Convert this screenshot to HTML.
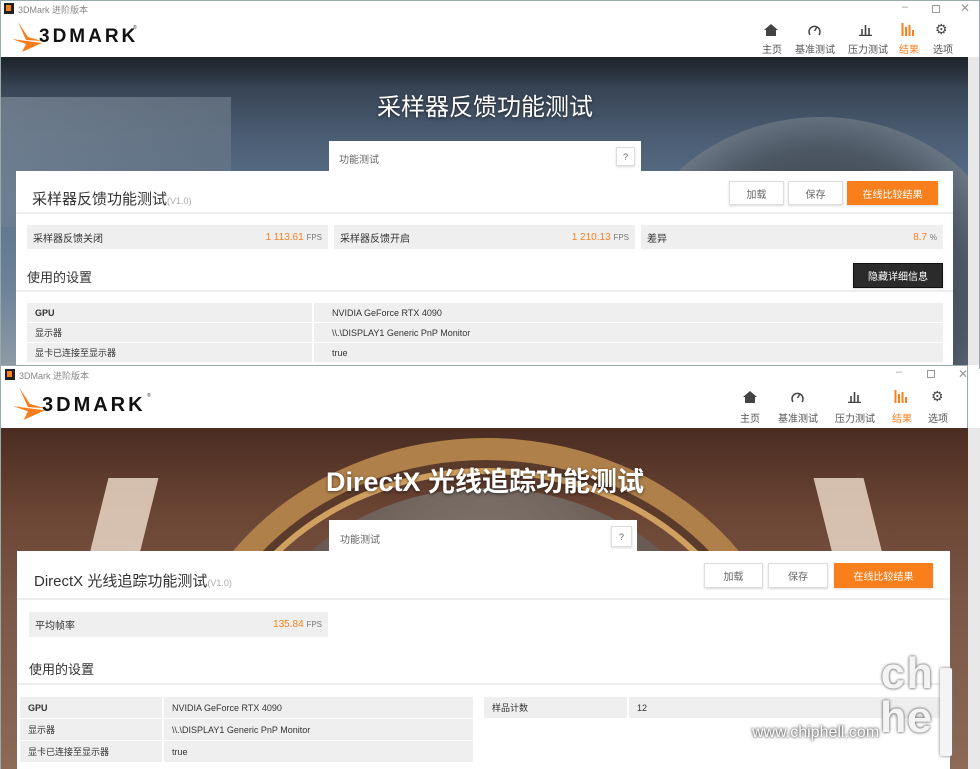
<!DOCTYPE html>
<html><head><meta charset="utf-8">
<style>
*{margin:0;padding:0;box-sizing:border-box}
html,body{width:980px;height:769px;overflow:hidden}
body{background:#fff;font-family:"Liberation Sans","Noto Sans CJK SC",sans-serif;color:#333;position:relative}
.a{position:absolute}
.t{font-size:10px;color:#888;white-space:nowrap}
.nav{font-size:10px;color:#555;text-align:center;white-space:nowrap}
.btn{position:absolute;background:#fff;border:1px solid #ddd;font-size:10px;color:#666;display:flex;align-items:center;justify-content:center;box-shadow:0 1px 2px rgba(0,0,0,.15)}
.or{background:#f87f1c;color:#fff;border-color:#f87f1c}
.box{position:absolute;background:#efefef;font-size:10px;color:#333;display:flex;align-items:center;justify-content:space-between;padding:0 6px}
.box b{color:#f87f1c;font-weight:normal}
.box small{color:#777;font-size:8px}
.row{position:absolute;background:#efefef;font-size:9px;color:#333;display:flex;align-items:center;padding-left:8px}
.hero1{background:linear-gradient(180deg,#2b3440 0%,#4a5c72 25%,#5f7690 50%,#6d8299 75%,#8e9aa5 100%)}
.logo{font-weight:bold;font-size:19px;letter-spacing:3px;color:#111;font-family:"Liberation Sans",sans-serif}
</style></head><body>

<!-- ===== Window 1 ===== -->
<div class="a" style="left:0;top:0;width:980px;height:18px;background:#fff"></div>
<div class="a" style="left:4px;top:3px;width:10px;height:11px;background:#222"></div>
<div class="a" style="left:6px;top:5px;width:5px;height:6px;background:#f87f1c"></div>
<div class="a t" style="left:18px;top:3px;font-size:9px">3DMark 进阶版本</div>
<div class="a t" style="left:902px;top:1px;font-size:11px;color:#999">–</div>
<div class="a" style="left:932px;top:5px;width:8px;height:8px;border:1px solid #999"></div>
<div class="a t" style="left:960px;top:1px;font-size:12px;color:#999">✕</div>

<svg class="a" style="left:12px;top:22px" width="30" height="32" viewBox="0 0 30 32"><path d="M6 0 L16 15 L30 19 L14 18 Z" fill="#f87f1c"/><path d="M0 17 L30 21 L10 30 L14 22 Z" fill="#f87f1c"/></svg>
<div class="a logo" style="left:39px;top:26px">3DMARK</div>
<div class="a" style="left:133px;top:25px;font-size:5px;color:#333">®</div>

<svg class="a" style="left:764px;top:24px" width="14" height="12"><path d="M7 0 L14 6 L12 6 L12 12 L2 12 L2 6 L0 6Z" fill="#444"/></svg>
<svg class="a" style="left:808px;top:24px" width="13" height="12"><path d="M2 11 A5.5 5.5 0 1 1 11 11" stroke="#444" stroke-width="1.5" fill="none"/><path d="M6.5 7 L9 3" stroke="#444" stroke-width="1.4"/></svg>
<svg class="a" style="left:859px;top:24px" width="13" height="12"><path d="M3 5v6M6.5 1v10M10 4v7M0 11.5h13" stroke="#444" stroke-width="1.6"/></svg>
<svg class="a" style="left:901px;top:23px" width="14" height="13"><path d="M1.5 0v13M5 4v9M8.5 2v11M12 7v6" stroke="#f87f1c" stroke-width="2"/></svg>
<div class="a" style="left:935px;top:21px;font-size:14px;color:#444">⚙</div>
<div class="a nav" style="left:762px;top:41px">主页</div>
<div class="a nav" style="left:795px;top:41px">基准测试</div>
<div class="a nav" style="left:848px;top:41px">压力测试</div>
<div class="a nav" style="left:899px;top:41px;color:#f87f1c">结果</div>
<div class="a nav" style="left:933px;top:41px">选项</div>

<div class="a hero1" style="left:1px;top:57px;width:967px;height:308px;overflow:hidden">
  <div class="a" style="left:0;top:40px;width:230px;height:130px;background:linear-gradient(160deg,#9aa6b2,#5d6b7a);opacity:.5"></div>
  <div class="a" style="left:620px;top:60px;width:400px;height:360px;border-radius:50%;background:radial-gradient(circle,#3a4048 30%,#4d5865 55%,#6a7583 70%,transparent 72%)"></div>
  <div class="a" style="left:0;top:0;width:967px;height:30px;background:linear-gradient(180deg,rgba(20,25,30,.6),transparent)"></div>
</div>
<div class="a" style="left:968px;top:57px;width:12px;height:308px;background:#e8e8e8"></div>
<div class="a" style="left:0;top:0;width:980px;height:369px;border:1px solid #9aa;border-bottom:none"></div>

<div class="a" style="left:300px;top:87px;width:370px;text-align:center;font-size:24px;color:#fff;text-shadow:0 1px 3px rgba(0,0,0,.6)">采样器反馈功能测试</div>
<div class="a" style="left:329px;top:141px;width:312px;height:31px;background:#fff"></div>
<div class="a t" style="left:339px;top:151px;color:#666">功能测试</div>
<div class="btn" style="left:616px;top:147px;width:19px;height:19px;font-size:9px">?</div>

<div class="a" style="left:16px;top:171px;width:937px;height:194px;background:#fff"></div>
<div class="a" style="left:32px;top:188px;font-size:15px;color:#333;white-space:nowrap">采样器反馈功能测试<span style="font-size:9px;color:#aaa">(V1.0)</span></div>
<div class="btn" style="left:729px;top:181px;width:55px;height:24px">加载</div>
<div class="btn" style="left:788px;top:181px;width:55px;height:24px">保存</div>
<div class="btn or" style="left:847px;top:181px;width:91px;height:24px">在线比较结果</div>
<div class="a" style="left:16px;top:212px;width:937px;height:2px;background:#eee"></div>
<div class="box" style="left:27px;top:225px;width:301px;height:24px"><span>采样器反馈关闭</span><span><b>1 113.61</b> <small>FPS</small></span></div>
<div class="box" style="left:334px;top:225px;width:301px;height:24px"><span>采样器反馈开启</span><span><b>1 210.13</b> <small>FPS</small></span></div>
<div class="box" style="left:641px;top:225px;width:302px;height:24px"><span>差异</span><span><b>8.7</b> <small>%</small></span></div>
<div class="a" style="left:27px;top:267px;font-size:13px;color:#333">使用的设置</div>
<div class="btn" style="left:853px;top:263px;width:90px;height:25px;background:#2b2b2b;color:#fff;border-color:#111">隐藏详细信息</div>
<div class="a" style="left:16px;top:290px;width:937px;height:2px;background:#eee"></div>
<div class="row" style="left:27px;top:303px;width:285px;height:19px;font-weight:bold">GPU</div>
<div class="row" style="left:314px;top:303px;width:629px;height:19px;padding-left:18px">NVIDIA GeForce RTX 4090</div>
<div class="row" style="left:27px;top:323px;width:285px;height:19px">显示器</div>
<div class="row" style="left:314px;top:323px;width:629px;height:19px;padding-left:18px">\\.\DISPLAY1 Generic PnP Monitor</div>
<div class="row" style="left:27px;top:343px;width:285px;height:19px">显卡已连接至显示器</div>
<div class="row" style="left:314px;top:343px;width:629px;height:19px;padding-left:18px">true</div>

<!-- ===== Window 2 ===== -->
<div class="a" style="left:0;top:365px;width:968px;height:404px;background:#fff;border:1px solid #9aa;border-bottom:none"></div>
<div class="a" style="left:5px;top:369px;width:10px;height:11px;background:#222"></div>
<div class="a" style="left:7px;top:371px;width:5px;height:6px;background:#f87f1c"></div>
<div class="a t" style="left:19px;top:369px;font-size:9px">3DMark 进阶版本</div>
<div class="a t" style="left:896px;top:366px;font-size:11px;color:#999">–</div>
<div class="a" style="left:927px;top:370px;width:8px;height:8px;border:1px solid #999"></div>
<div class="a t" style="left:958px;top:367px;font-size:12px;color:#999">✕</div>

<svg class="a" style="left:13px;top:388px" width="32" height="34" viewBox="0 0 30 32"><path d="M6 0 L16 15 L30 19 L14 18 Z" fill="#f87f1c"/><path d="M0 17 L30 21 L10 30 L14 22 Z" fill="#f87f1c"/></svg>
<div class="a logo" style="left:42px;top:394px;font-size:20px">3DMARK</div>
<div class="a" style="left:147px;top:393px;font-size:5px;color:#333">®</div>

<svg class="a" style="left:743px;top:391px" width="14" height="12"><path d="M7 0 L14 6 L12 6 L12 12 L2 12 L2 6 L0 6Z" fill="#444"/></svg>
<svg class="a" style="left:791px;top:391px" width="13" height="12"><path d="M2 11 A5.5 5.5 0 1 1 11 11" stroke="#444" stroke-width="1.5" fill="none"/><path d="M6.5 7 L9 3" stroke="#444" stroke-width="1.4"/></svg>
<svg class="a" style="left:848px;top:391px" width="13" height="12"><path d="M3 5v6M6.5 1v10M10 4v7M0 11.5h13" stroke="#444" stroke-width="1.6"/></svg>
<svg class="a" style="left:894px;top:390px" width="14" height="13"><path d="M1.5 0v13M5 4v9M8.5 2v11M12 7v6" stroke="#f87f1c" stroke-width="2"/></svg>
<div class="a" style="left:931px;top:388px;font-size:14px;color:#444">⚙</div>
<div class="a nav" style="left:740px;top:410px">主页</div>
<div class="a nav" style="left:778px;top:410px">基准测试</div>
<div class="a nav" style="left:835px;top:410px">压力测试</div>
<div class="a nav" style="left:892px;top:410px;color:#f87f1c">结果</div>
<div class="a nav" style="left:928px;top:410px">选项</div>

<div class="a" style="left:1px;top:428px;width:967px;height:341px;overflow:hidden;background:linear-gradient(180deg,#4a2c22 0%,#6b4534 25%,#7a5646 50%,#8c6a56 100%)">
  <div class="a" style="left:170px;top:10px;width:630px;height:560px;border-radius:50%;border:22px solid #b0804a;box-shadow:inset 0 0 0 8px #5a3a2a,inset 0 0 0 14px #d0a060"></div>
  <div class="a" style="left:230px;top:60px;width:510px;height:460px;border-radius:50%;background:radial-gradient(ellipse at 50% 30%,#8a8078,#5a4a42 70%)"></div>
  <div class="a" style="left:90px;top:50px;width:50px;height:140px;background:#e9d6c6;transform:skewX(-14deg);opacity:.85"></div>
  <div class="a" style="left:830px;top:50px;width:50px;height:140px;background:#e9d6c6;transform:skewX(14deg);opacity:.85"></div>
</div>
<div class="a" style="left:968px;top:428px;width:12px;height:341px;background:#e8e8e8"></div>

<div class="a" style="left:290px;top:460px;width:390px;text-align:center;font-size:27px;font-weight:bold;color:#fff;text-shadow:0 1px 3px rgba(0,0,0,.6);white-space:nowrap">DirectX 光线追踪功能测试</div>
<div class="a" style="left:329px;top:520px;width:308px;height:32px;background:#fff"></div>
<div class="a t" style="left:340px;top:531px;color:#666">功能测试</div>
<div class="btn" style="left:611px;top:526px;width:21px;height:21px;font-size:9px">?</div>

<div class="a" style="left:17px;top:551px;width:933px;height:218px;background:#fff"></div>
<div class="a" style="left:34px;top:570px;font-size:15px;color:#333;white-space:nowrap">DirectX 光线追踪功能测试<span style="font-size:9px;color:#aaa">(V1.0)</span></div>
<div class="btn" style="left:704px;top:563px;width:59px;height:25px">加载</div>
<div class="btn" style="left:768px;top:563px;width:60px;height:25px">保存</div>
<div class="btn or" style="left:834px;top:563px;width:99px;height:25px">在线比较结果</div>
<div class="a" style="left:17px;top:598px;width:933px;height:2px;background:#eee"></div>
<div class="box" style="left:29px;top:612px;width:299px;height:25px"><span>平均帧率</span><span><b>135.84</b> <small>FPS</small></span></div>
<div class="a" style="left:29px;top:659px;font-size:13px;color:#333">使用的设置</div>
<div class="a" style="left:17px;top:683px;width:933px;height:2px;background:#eee"></div>
<div class="row" style="left:20px;top:697px;width:142px;height:21px;font-weight:bold">GPU</div>
<div class="row" style="left:164px;top:697px;width:309px;height:21px">NVIDIA GeForce RTX 4090</div>
<div class="row" style="left:20px;top:719px;width:142px;height:21px">显示器</div>
<div class="row" style="left:164px;top:719px;width:309px;height:21px">\\.\DISPLAY1 Generic PnP Monitor</div>
<div class="row" style="left:20px;top:741px;width:142px;height:21px">显卡已连接至显示器</div>
<div class="row" style="left:164px;top:741px;width:309px;height:21px">true</div>
<div class="row" style="left:484px;top:697px;width:143px;height:21px">样品计数</div>
<div class="row" style="left:629px;top:697px;width:321px;height:21px">12</div>

<div class="a" style="left:752px;top:724px;font-size:16px;color:#fff;text-shadow:0 0 2px #555,0 0 3px #555;white-space:nowrap">www.chiphell.com</div>
<div class="a" style="left:880px;top:655px;font-size:44px;line-height:44px;font-weight:bold;color:#f4f4f4;text-shadow:0 0 2px #777,0 0 3px #777;font-family:'Liberation Mono',monospace">ch<br>he</div>
<div class="a" style="left:940px;top:668px;width:12px;height:88px;background:#f4f4f4;box-shadow:0 0 3px #777;border-radius:2px"></div>
</body></html>
